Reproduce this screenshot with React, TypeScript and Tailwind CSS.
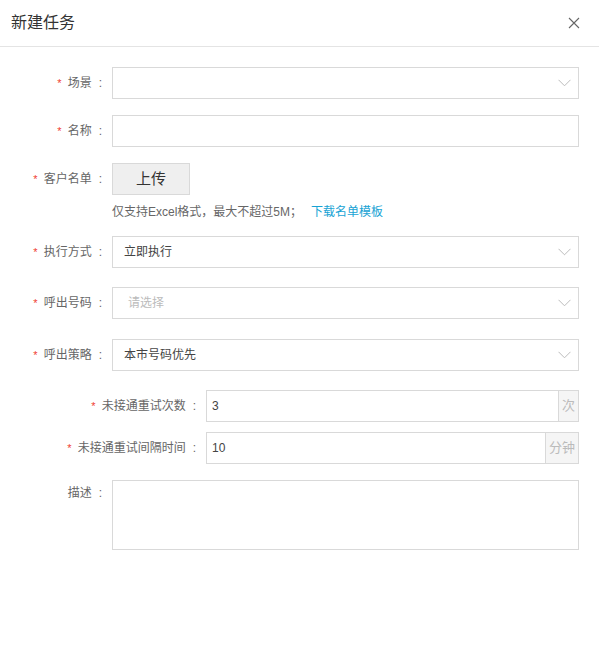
import React from 'react';

const font = { fontFamily: '"Liberation Sans", "Noto Sans CJK SC", sans-serif' };

function Chevron() {
  return (
    <svg width="13" height="8" viewBox="0 0 13 8" className="shrink-0">
      <path d="M0.5 0.8 L6.5 6.8 L12.5 0.8" fill="none" stroke="#bcbcbc" strokeWidth="1" />
    </svg>
  );
}

function Label({ text, required = true, width }: { text: string; required?: boolean; width: string }) {
  return (
    <div className={`${width} shrink-0 h-8 flex items-center justify-end pr-[10px] text-xs text-[#666]`}>
      {required && <span className="text-[#f04134] mr-[6px] text-[11px]">*</span>}
      <span>{text}</span>
      <span className="ml-[7px]">:</span>
    </div>
  );
}

function Select({ value, placeholder }: { value?: string; placeholder?: string }) {
  return (
    <div className="flex-1 h-8 border border-[#d9d9d9] bg-white flex items-center justify-between pl-[11px] pr-[7px] text-xs">
      {value ? (
        <span className="text-[#444]">{value}</span>
      ) : (
        <span className="text-[#bbb] pl-1">{placeholder}</span>
      )}
      <Chevron />
    </div>
  );
}

function AddonInput({ value, unit }: { value: string; unit: string }) {
  return (
    <div className="flex-1 h-8 border border-[#d9d9d9] flex text-xs">
      <div className="flex-1 flex items-center pl-[5px] text-[#444]">{value}</div>
      <div className="border-l border-[#d9d9d9] bg-[#f5f5f5] flex items-center px-[3px] text-[#bbb] text-[13px]">
        {unit}
      </div>
    </div>
  );
}

export default function App() {
  return (
    <div className="w-[599px] h-[654px] bg-white" style={font}>
      {/* Header */}
      <div className="h-[47px] border-b border-[#e4e4e4] flex items-center justify-between pl-[11px] pr-[19px]">
        <h2 className="text-base text-[#333]">新建任务</h2>
        <svg width="12" height="12" viewBox="0 0 12 12">
          <path d="M1 1 L11 11 M11 1 L1 11" stroke="#666" strokeWidth="1.1" />
        </svg>
      </div>

      <div className="pt-5 pr-[20px]">
        <div className="flex mb-4">
          <Label text="场景" width="w-[112px]" />
          <Select />
        </div>

        <div className="flex mb-4">
          <Label text="名称" width="w-[112px]" />
          <div className="flex-1 h-8 border border-[#d9d9d9]" />
        </div>

        <div className="flex">
          <Label text="客户名单" width="w-[112px]" />
          <div className="w-[78px] h-8 border border-[#d9d9d9] bg-[#efefef] flex items-center justify-center text-[15px] text-[#333]">
            上传
          </div>
        </div>
        <div className="pl-[112px] mt-[8px] mb-[15px] h-[18px] flex items-center text-xs text-[#666]">
          <span>仅支持Excel格式，最大不超过5M；</span>
          <span className="ml-[9px] text-[#18a3d4]">下载名单模板</span>
        </div>

        <div className="flex mb-[19px]">
          <Label text="执行方式" width="w-[112px]" />
          <Select value="立即执行" />
        </div>

        <div className="flex mb-5">
          <Label text="呼出号码" width="w-[112px]" />
          <Select placeholder="请选择" />
        </div>

        <div className="flex mb-[19px]">
          <Label text="呼出策略" width="w-[112px]" />
          <Select value="本市号码优先" />
        </div>

        <div className="flex mb-[10px]">
          <Label text="未接通重试次数" width="w-[206px]" />
          <AddonInput value="3" unit="次" />
        </div>

        <div className="flex mb-4">
          <Label text="未接通重试间隔时间" width="w-[206px]" />
          <AddonInput value="10" unit="分钟" />
        </div>

        <div className="flex">
          <div className="w-[112px] shrink-0 pr-[10px] pt-[5px] flex justify-end text-xs text-[#666]">
            <span>描述</span>
            <span className="ml-[7px]">:</span>
          </div>
          <div className="flex-1 h-[70px] border border-[#d9d9d9]" />
        </div>
      </div>
    </div>
  );
}
